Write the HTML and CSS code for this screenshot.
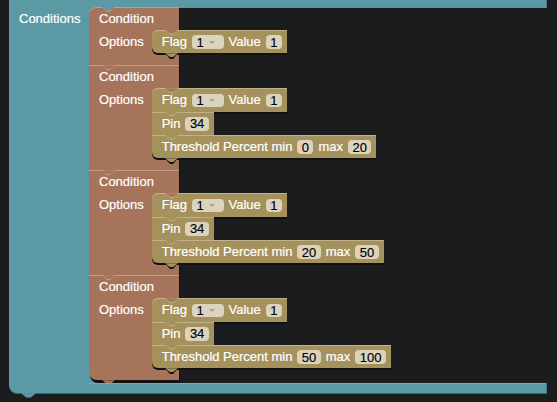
FILE: index.html
```html
<!DOCTYPE html>
<html>
<head>
<meta charset="utf-8">
<link rel="stylesheet" href="styles.css">
</head>
<body>
<div class="root">
  <div class="root-top"></div>
  <div class="root-mid">
    <div class="root-label">Conditions</div>
    <div class="cond-stack">
      <div class="cond cond-first">
        <div class="cond-title">Condition</div>
        <div class="cond-opts">
          <div class="opts-label">Options</div>
          <div class="opt-stack">
            <div class="opt">
              <span class="lbl">Flag</span>
              <span class="field dd">1<span class="arrow"></span></span>
              <span class="lbl">Value</span>
              <span class="field">1</span>
            </div>
          </div>
        </div>
      </div>
      <div class="cond">
        <div class="cond-title">Condition</div>
        <div class="cond-opts">
          <div class="opts-label">Options</div>
          <div class="opt-stack">
            <div class="opt">
              <span class="lbl">Flag</span>
              <span class="field dd">1<span class="arrow"></span></span>
              <span class="lbl">Value</span>
              <span class="field">1</span>
            </div>
            <div class="opt">
              <span class="lbl">Pin</span>
              <span class="field">34</span>
            </div>
            <div class="opt">
              <span class="lbl">Threshold Percent min</span>
              <span class="field">0</span>
              <span class="lbl">max</span>
              <span class="field">20</span>
            </div>
          </div>
        </div>
      </div>
      <div class="cond">
        <div class="cond-title">Condition</div>
        <div class="cond-opts">
          <div class="opts-label">Options</div>
          <div class="opt-stack">
            <div class="opt">
              <span class="lbl">Flag</span>
              <span class="field dd">1<span class="arrow"></span></span>
              <span class="lbl">Value</span>
              <span class="field">1</span>
            </div>
            <div class="opt">
              <span class="lbl">Pin</span>
              <span class="field">34</span>
            </div>
            <div class="opt">
              <span class="lbl">Threshold Percent min</span>
              <span class="field">20</span>
              <span class="lbl">max</span>
              <span class="field">50</span>
            </div>
          </div>
        </div>
      </div>
      <div class="cond cond-last">
        <div class="cond-title">Condition</div>
        <div class="cond-opts">
          <div class="opts-label">Options</div>
          <div class="opt-stack">
            <div class="opt">
              <span class="lbl">Flag</span>
              <span class="field dd">1<span class="arrow"></span></span>
              <span class="lbl">Value</span>
              <span class="field">1</span>
            </div>
            <div class="opt">
              <span class="lbl">Pin</span>
              <span class="field">34</span>
            </div>
            <div class="opt">
              <span class="lbl">Threshold Percent min</span>
              <span class="field">50</span>
              <span class="lbl">max</span>
              <span class="field">100</span>
            </div>
          </div>
        </div>
      </div>
    </div>
  </div>
  <div class="root-bottom"></div>
</div>
</body>
</html>
```

FILE: styles.css
```css
* { box-sizing: border-box; }
html, body { margin: 0; height: 100%; }
body {
  background: #1b1c1e;
  font-family: "Liberation Sans", Arial, sans-serif;
  font-size: 13px;
  color: #fff;
  overflow: hidden;
  -webkit-text-stroke: 0.2px #fff;
}

.root {
  margin-left: 9px;
  width: 538px;
}
.root-top {
  height: 7px;
  background: #5b99a5;
  box-shadow: inset -1px 0 0 #467c86;
}
.root-mid {
  display: flex;
  align-items: stretch;
  background: linear-gradient(#5f8f98, #5f8f98) no-repeat 80px 0 / 100% 1px;
}
.root-label {
  width: 80px;
  flex-shrink: 0;
  background: #5b99a5;
  padding-left: 10px;
  line-height: 23px;
  white-space: nowrap;
}

.cond-stack {
  position: relative;
  width: 90px;
  display: flex;
  flex-direction: column;
  padding-bottom: 3px;
  background:
    linear-gradient(#5b99a5, #5b99a5) no-repeat 0 0 / 10px 10px,
    linear-gradient(#5b99a5, #5b99a5) no-repeat 0 100% / 10px 14px;
}
.cond-stack::before,
.cond-stack::after {
  content: "";
  position: absolute;
  left: 13px;
  width: 13px;
  clip-path: polygon(0 0, 100% 0, 62% 100%, 38% 100%);
}
.cond-stack::before {
  bottom: -2.6px;
  height: 5.6px;
  background: #111112;
}
.cond-stack::after {
  bottom: -0.6px;
  height: 3.6px;
  background: #a5745b;
}

.cond {
  position: relative;
  background: #a5745b;
  padding-bottom: 12px;
  box-shadow: inset 0 1px 0 #c09e8c, 1px 3px 0 #111112;
}
.cond::before,
.cond::after {
  content: "";
  position: absolute;
  left: 13px;
  top: 0;
  width: 13px;
  clip-path: polygon(0 0, 100% 0, 62% 100%, 38% 100%);
}
.cond::before {
  height: 4.6px;
  background: #c09e8c;
}
.cond::after {
  height: 3.6px;
  background: #a5745b;
}
.cond-first { border-top-left-radius: 8px; }
.cond-first::after { background: #5b99a5; }
.cond-last { border-bottom-left-radius: 8px; }

.cond-title {
  height: 23px;
  line-height: 23px;
  padding-left: 10px;
  white-space: nowrap;
}
.cond-opts {
  display: flex;
}
.opts-label {
  width: 63px;
  flex-shrink: 0;
  padding-left: 10px;
  line-height: 23.33px;
}

.opt-stack {
  position: relative;
  display: flex;
  flex-direction: column;
  align-items: flex-start;
}
.opt-stack::before,
.opt-stack::after {
  content: "";
  position: absolute;
  left: 13px;
  width: 13px;
  clip-path: polygon(0 0, 100% 0, 62% 100%, 38% 100%);
}
.opt-stack::before {
  bottom: -5.6px;
  height: 5.6px;
  background: #111112;
}
.opt-stack::after {
  bottom: -3.6px;
  height: 3.6px;
  background: #a5915b;
}

.opt {
  position: relative;
  height: 23.33px;
  display: flex;
  align-items: center;
  gap: 5px;
  padding: 0 5px 0 9.7px;
  background: #a5915b;
  white-space: nowrap;
  box-shadow: inset 0 1px 0 #c0b28c, 0 2px 0 #111112;
}
.opt:first-child { border-top-left-radius: 6px; }
.opt:last-child { border-bottom-left-radius: 6px; }
.opt::before,
.opt::after {
  content: "";
  position: absolute;
  left: 13px;
  top: 0;
  width: 13px;
  clip-path: polygon(0 0, 100% 0, 62% 100%, 38% 100%);
}
.opt::before {
  height: 4.6px;
  background: #c0b28c;
}
.opt::after {
  height: 3.6px;
  background: #a5915b;
}
.opt:first-child::after { background: #a5745b; }

.field {
  display: inline-flex;
  align-items: center;
  height: 13.5px;
  padding: 0 4.4px;
  margin-top: 1px;
  border-radius: 4px;
  background: #dbd3bd;
  color: #000;
  -webkit-text-stroke: 0.15px #000;
  line-height: 13px;
}
.arrow {
  width: 0;
  height: 0;
  border-left: 3px solid transparent;
  border-right: 3px solid transparent;
  border-top: 3.5px solid #a9a08a;
  margin: 1px 4.5px 0 5px;
}

.root-bottom {
  position: relative;
  height: 10px;
  background:
    linear-gradient(#77abb5, #77abb5) no-repeat 80px 0 / 100% 1px,
    #5b99a5;
  border-bottom-left-radius: 8px;
  box-shadow: inset -1px 0 0 #467c86, 0 1px 0 #3a646c;
}
.root-bottom::before,
.root-bottom::after {
  content: "";
  position: absolute;
  left: 12px;
  width: 15px;
  clip-path: polygon(0 0, 100% 0, 62% 100%, 38% 100%);
}
.root-bottom::before {
  bottom: -5px;
  height: 5px;
  background: #3a646c;
}
.root-bottom::after {
  bottom: -4px;
  height: 4px;
  background: #5b99a5;
}
```
